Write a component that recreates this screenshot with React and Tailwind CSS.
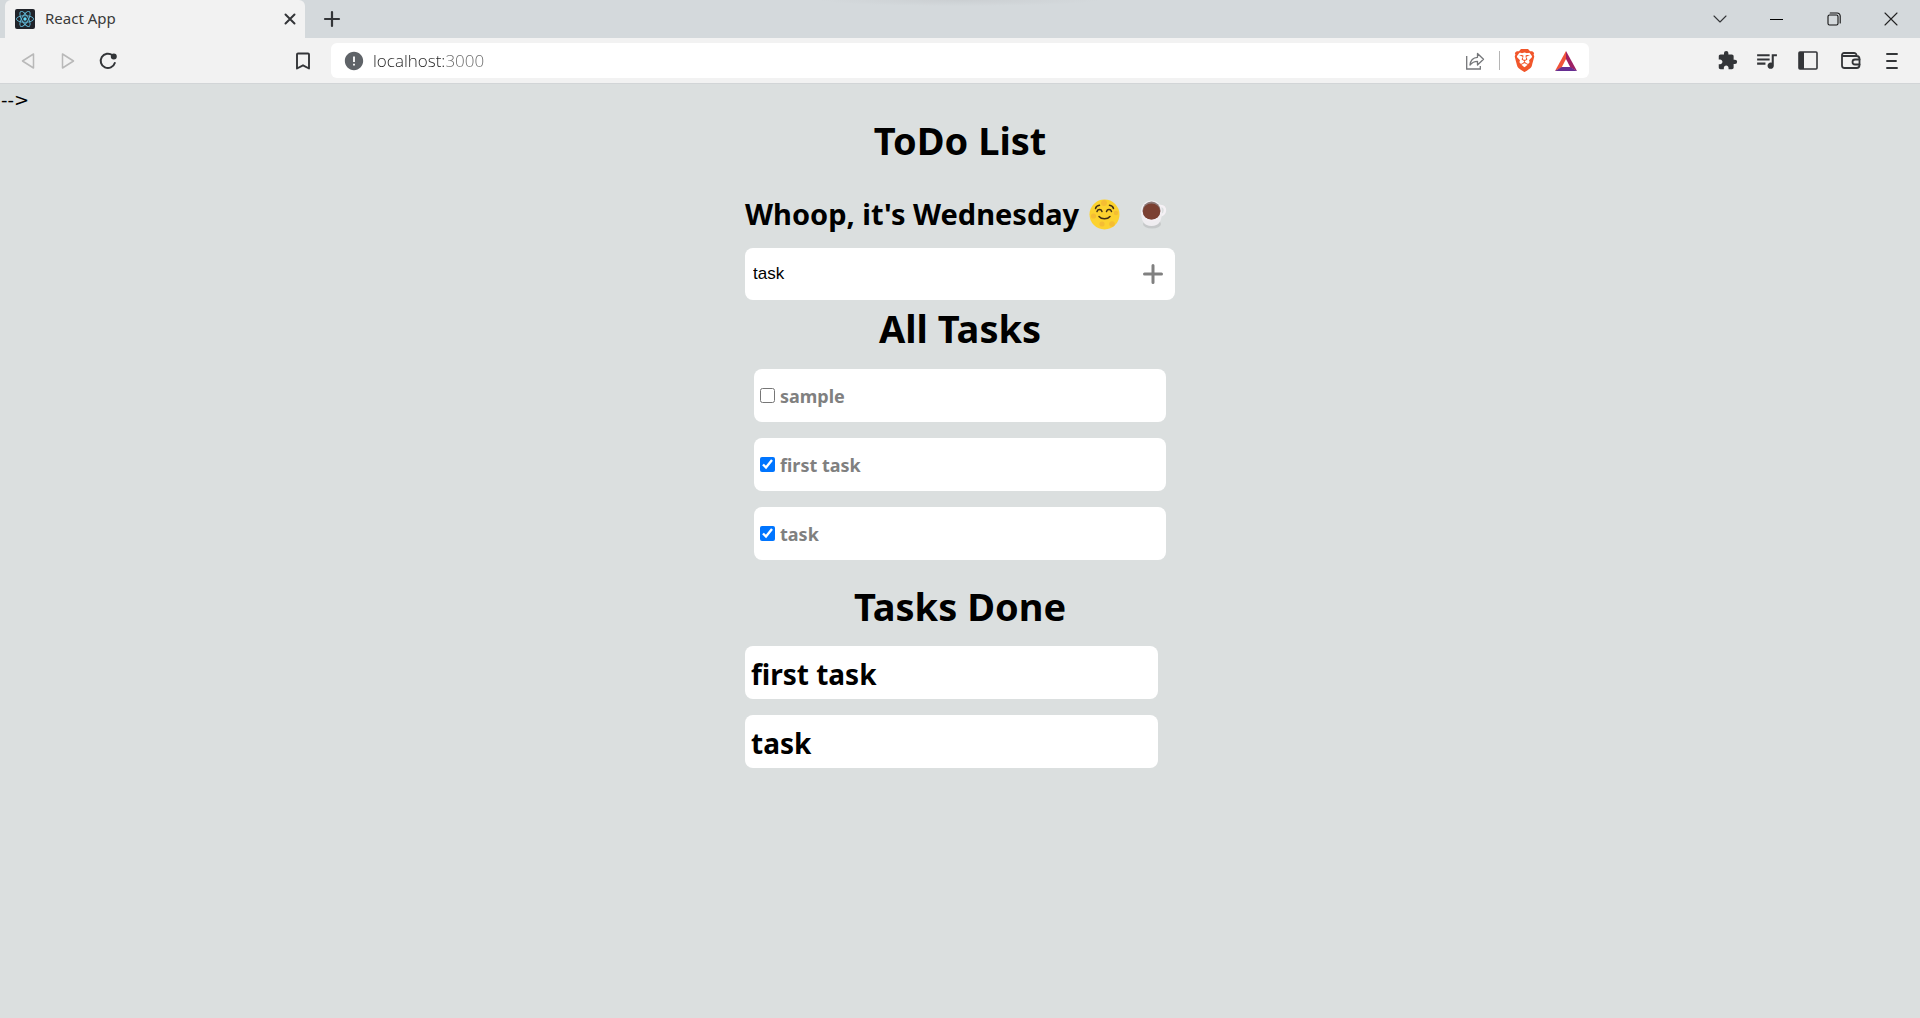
import React, { useState } from "react";
import { MdExtension, MdQueueMusic, MdError } from "react-icons/md";
import { SiBrave } from "react-icons/si";

function ReactLogo() {
  return (
    <svg width="20" height="20" viewBox="0 0 20 20" aria-hidden="true">
      <rect width="20" height="20" rx="2" fill="#20232a" />
      <g fill="none" stroke="#61b8d6" strokeWidth="0.9">
        <ellipse cx="10" cy="10" rx="8.6" ry="3.3" />
        <ellipse cx="10" cy="10" rx="8.6" ry="3.3" transform="rotate(60 10 10)" />
        <ellipse cx="10" cy="10" rx="8.6" ry="3.3" transform="rotate(120 10 10)" />
      </g>
      <circle cx="10" cy="10" r="1.7" fill="#61dafb" />
    </svg>
  );
}

function Stroke({ size = 18, width = 1.8, color = "#333538", children }) {
  return (
    <svg
      width={size}
      height={size}
      viewBox={`0 0 ${size} ${size}`}
      fill="none"
      stroke={color}
      strokeWidth={width}
      strokeLinecap="round"
      strokeLinejoin="round"
      aria-hidden="true"
    >
      {children}
    </svg>
  );
}

function IconButton({ label, className, children }) {
  return (
    <button type="button" aria-label={label} className={`flex h-full items-center justify-center ${className}`}>
      {children}
    </button>
  );
}

function TabStrip() {
  return (
    <div className="flex h-[38px] bg-[#d4d9dc] bg-[radial-gradient(ellipse_140px_6px_at_50%_0,#cbcfd2,#d4d9dc)] pl-[5px]">
      <div className="flex w-[300px] items-center rounded-t-md bg-[#f2f2f2] pr-1 pl-2.5">
        <ReactLogo />
        <span className="ml-2.5 pb-0.5 text-[15px] text-[#3a3a3a]">React App</span>
        <IconButton label="Close tab" className="ml-auto w-[22px]">
          <Stroke size={12} width={2}>
            <path d="M1.5 1.5l9 9M10.5 1.5l-9 9" />
          </Stroke>
        </IconButton>
      </div>
      <IconButton label="New tab" className="ml-2 w-[38px]">
        <Stroke size={18} width={2.2}>
          <path d="M9 2v14M2 9h14" />
        </Stroke>
      </IconButton>
      <div className="ml-auto flex pr-px">
        <IconButton label="Search tabs" className="w-[57px]">
          <Stroke size={14} width={1.1}>
            <path d="M1 4l6 6 6-6" />
          </Stroke>
        </IconButton>
        <IconButton label="Minimize" className="w-[57px]">
          <span className="h-px w-[13px] bg-black" />
        </IconButton>
        <IconButton label="Restore" className="w-[57px]">
          <Stroke size={14} width={1.1} color="#111">
            <rect x="1" y="3" width="10" height="10" rx="1.5" />
            <path d="M3.2 1h7a3 3 0 0 1 3 3v7" />
          </Stroke>
        </IconButton>
        <IconButton label="Close" className="w-[57px]">
          <Stroke size={14} width={1.1} color="#222">
            <path d="M1 1l12 12M13 1L1 13" />
          </Stroke>
        </IconButton>
      </div>
    </div>
  );
}

function Toolbar() {
  return (
    <div className="flex h-[46px] items-center border-b border-[#d2d5d7] bg-[#f2f2f2]">
      <div className="flex h-full w-[331px] items-center pr-2 pl-2">
        <IconButton label="Back" className="w-10">
          <Stroke color="#b9b9b9" width={1.5}>
            <path d="M14.5 2v14L3.5 9z" />
          </Stroke>
        </IconButton>
        <IconButton label="Forward" className="w-10">
          <Stroke color="#b9b9b9" width={1.5}>
            <path d="M3.5 2v14l11-7z" />
          </Stroke>
        </IconButton>
        <IconButton label="Reload" className="w-10">
          <Stroke width={2}>
            <path d="M13.5 3.3A7.2 7.2 0 1 0 15.8 11" />
            <circle cx="14.8" cy="4.6" r="2" fill="#333538" stroke="#333538" />
          </Stroke>
        </IconButton>
        <IconButton label="Bookmark" className="ml-auto w-10">
          <Stroke width={1.9}>
            <path d="M3 2.5a1 1 0 0 1 1-1h10a1 1 0 0 1 1 1v14l-6-3.2-6 3.2z" />
          </Stroke>
        </IconButton>
      </div>
      <div className="flex h-[35px] flex-1 items-center rounded-md bg-white pr-px pl-3">
        <MdError size={22} color="#5f6368" aria-hidden="true" />
        <input
          type="text"
          aria-label="Address"
          defaultValue="localhost:3000"
          className="ml-2 h-full min-w-0 flex-1 bg-[linear-gradient(90deg,#222_72px,#666_72px)] bg-clip-text font-['Open_Sans',sans-serif] text-[17px] font-light text-transparent caret-black outline-none"
        />
        <IconButton label="Share" className="w-10">
          <svg width="20" height="18" viewBox="0 0 20 18" fill="none" stroke="#747679" strokeWidth="1.3" aria-hidden="true">
            <path d="M1.7 4v13h13.6v-3" />
            <path d="M5 13c.5-5 3-7.5 7.5-7.7V1.5l6 5.8-6 5.7V9.3C9 9.3 7 10.5 5 13z" strokeLinejoin="round" />
          </svg>
        </IconButton>
        <span className="mx-1 h-[19px] w-px bg-[#b5b5b5]" />
        <IconButton label="Brave Shields" className="w-10">
          <SiBrave size={23} color="#f1562b" aria-hidden="true" />
        </IconButton>
        <IconButton label="Brave Rewards" className="w-11">
          <svg width="22" height="20" viewBox="0 0 22 20" aria-hidden="true">
            <path d="M11 0L0 20l6.6-3.5L11 8z" fill="#f0533a" />
            <path d="M11 0l11 20-6.6-3.5L11 8z" fill="#9e1f63" />
            <path d="M0 20h22l-6.6-4H6.6z" fill="#662d91" />
          </svg>
        </IconButton>
      </div>
      <div className="flex h-full w-[331px] items-center justify-end pr-2 text-[#333538]">
        <IconButton label="Extensions" className="w-[41px]">
          <MdExtension size={21} />
        </IconButton>
        <IconButton label="Media" className="w-[41px] pr-1">
          <MdQueueMusic size={25} />
        </IconButton>
        <IconButton label="Sidebar" className="w-[41px] pr-1">
          <svg width="20" height="19" viewBox="0 0 20 19" aria-hidden="true">
            <rect x="1" y="1" width="18" height="17" rx="1" fill="none" stroke="#333538" strokeWidth="1.6" />
            <path d="M1 1h5v17H1z" fill="#333538" />
          </svg>
        </IconButton>
        <IconButton label="Wallet" className="w-[41px]">
          <Stroke size={20} width={1.8}>
            <path d="M1.500 5h14a3 3 0 0 1 3 3v6a3 3 0 0 1-3 3h-12a2.500 2.500 0 0 1-2.500-2.500V4a2 2 0 0 1 2-2H13a2.500 2.500 0 0 1 2.500 2.500" />
            <path d="M18.500 8.500H14a2.500 2.500 0 0 0 0 5h4.500" />
          </Stroke>
        </IconButton>
        <IconButton label="Menu" className="w-[41px]">
          <Stroke size={18} width={1.9}>
            <path d="M4 2h10M4 9h9M4 16h10" />
          </Stroke>
        </IconButton>
      </div>
    </div>
  );
}

function SmileMoon() {
  return (
    <svg width="31" height="31" viewBox="0 0 31 31" role="img" aria-label="Smiling face">
      <circle cx="15.5" cy="15.5" r="15" fill="#fcd22f" />
      <g fill="#f5bd33">
        <circle cx="15" cy="4" r="3" />
        <circle cx="4.5" cy="17" r="2.6" />
        <circle cx="13" cy="25" r="2.6" />
        <circle cx="23" cy="25" r="2.8" />
        <circle cx="27" cy="14" r="2.2" />
      </g>
      <g fill="none" stroke="#3f2d14" strokeWidth="1.5" strokeLinecap="round">
        <path d="M6.5 9.5C7 7.5 8.5 6.5 10.5 6.3M24.5 9.5C24 7.5 22.5 6.5 20.5 6.3" />
        <path d="M8 12.5c.8-2.6 4.2-2.6 5 0M17.5 12.5c.8-2.6 4.2-2.6 5 0" />
        <path d="M10 17.5c2.5 3 8.5 3 11 0" />
      </g>
    </svg>
  );
}

function CoffeeCup() {
  return (
    <svg width="28" height="30" viewBox="0 0 28 30" role="img" aria-label="Cup of coffee">
      <ellipse cx="12" cy="25" rx="9" ry="4.5" fill="#c6c9ca" />
      <path d="M20 7c7-1 6.5 10-1 9.5" fill="none" stroke="#f5f1f5" strokeWidth="2.5" />
      <path d="M1 12c0 10 3 15 10.500 15s10.500-5 10.500-15z" fill="#efedf0" />
      <circle cx="11.5" cy="12" r="10.5" fill="#f3eff3" />
      <circle cx="11.5" cy="11.500" r="9" fill="#8d7a78" />
      <ellipse cx="11.5" cy="12.5" rx="8.7" ry="8" fill="#7b4032" />
    </svg>
  );
}

const initialTasks = [
  { id: 1, name: "sample", done: false },
  { id: 2, name: "first task", done: true },
  { id: 3, name: "task", done: true },
];

export default function App() {
  const [tasks, setTasks] = useState(initialTasks);
  const [draft, setDraft] = useState("task");

  const toggle = (id) => setTasks(tasks.map((t) => (t.id === id ? { ...t, done: !t.done } : t)));
  const add = (event) => {
    event.preventDefault();
    if (draft.trim()) setTasks([...tasks, { id: Date.now(), name: draft, done: false }]);
  };

  return (
    <div className="min-h-screen bg-[#dbdfdf] font-['Noto_Sans',sans-serif] text-black">
      <header>
        <TabStrip />
        <Toolbar />
      </header>
      <p className="pt-0.5 pl-px font-['DejaVu_Sans',sans-serif] text-[18px] leading-7">--&gt;</p>
      <main className="mx-auto flex max-w-[430px] flex-col">
        <h1 className="text-center text-[38px] leading-[52px] font-bold">ToDo List</h1>
        <h2 className="mt-5.5 flex items-center text-[29px] leading-[52px] font-bold whitespace-nowrap">
          Whoop, it's Wednesday
          <span className="ml-2.5 flex items-center gap-5">
            <SmileMoon />
            <CoffeeCup />
          </span>
        </h2>
        <form onSubmit={add} className="mt-2 flex h-[52px] items-center rounded-lg bg-white pr-2 pl-2">
          <input
            aria-label="New task"
            value={draft}
            onChange={(e) => setDraft(e.target.value)}
            className="h-full min-w-0 flex-1 font-['Liberation_Sans',sans-serif] text-[17px] outline-none"
          />
          <button type="submit" aria-label="Add task" className="flex size-7 items-center justify-center">
            <Stroke size={20} width={3} color="#808080">
              <path d="M10 1.5v17M1.5 10h17" />
            </Stroke>
          </button>
        </form>
        <h1 className="mt-0.5 text-center text-[38px] leading-[52px] font-bold">All Tasks</h1>
        <ul className="mx-[9px] mt-[15px] flex flex-col gap-4">
          {tasks.map((t) => (
            <li key={t.id} className="flex h-[53px] items-center rounded-lg bg-white px-1.5">
              <label className="flex items-center gap-[5px] text-[18px] font-bold text-[#808080]">
                <input type="checkbox" checked={t.done} onChange={() => toggle(t.id)} className="size-[15px] accent-[#0075ff]" />
                <span className="pt-0.5">{t.name}</span>
              </label>
            </li>
          ))}
        </ul>
        <h1 className="mt-5 text-center text-[38px] leading-[52px] font-bold">Tasks Done</h1>
        <ul className="mt-3.5 mr-[17px] flex flex-col gap-4">
          {tasks
            .filter((t) => t.done)
            .map((t) => (
              <li key={t.id} className="flex h-[53px] items-center rounded-lg bg-white px-1.5 pt-0.5 text-[28px] font-bold">
                {t.name}
              </li>
            ))}
        </ul>
      </main>
    </div>
  );
}
